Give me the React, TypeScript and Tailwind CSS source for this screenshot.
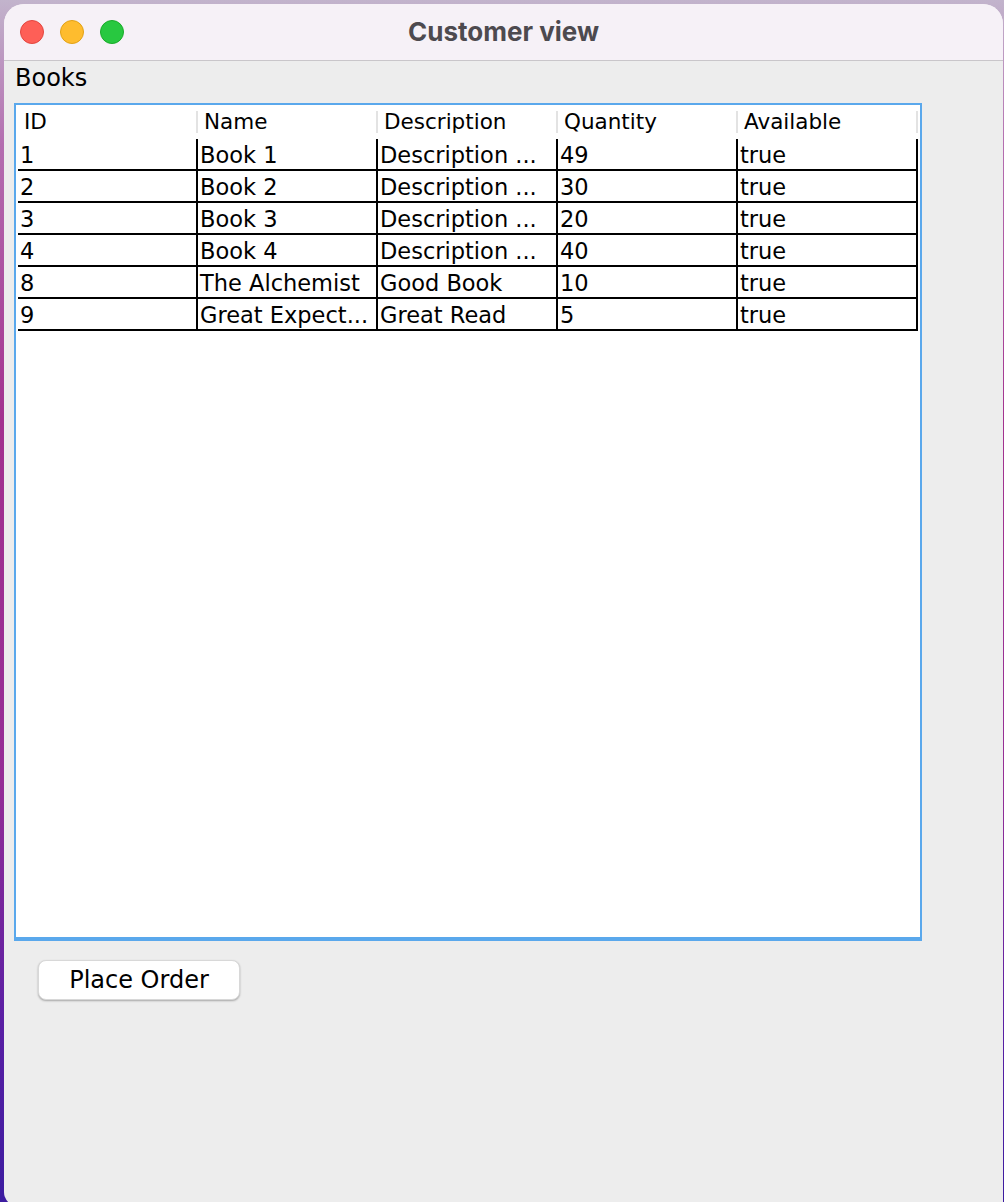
const columns = ['ID', 'Name', 'Description', 'Quantity', 'Available'];

const books = [
  ['1', 'Book 1', 'Description ...', '49', 'true'],
  ['2', 'Book 2', 'Description ...', '30', 'true'],
  ['3', 'Book 3', 'Description ...', '20', 'true'],
  ['4', 'Book 4', 'Description ...', '40', 'true'],
  ['8', 'The Alchemist', 'Good Book', '10', 'true'],
  ['9', 'Great Expect...', 'Great Read', '5', 'true'],
];

export default function App() {
  return (
    <div className="w-[1004px] h-[1202px] overflow-hidden bg-[linear-gradient(180deg,#c2b4cc_0%,#b46eb0_12%,#a3328f_35%,#952e96_65%,#5a1fa4_85%,#3c1ca0_100%)] pt-[4px] pl-[4px] pr-[1px]">
      <div className="h-[1202px] bg-[#ededed] rounded-t-[20px] rounded-bl-[14px] overflow-hidden flex flex-col font-['DejaVu_Sans',sans-serif]">
        {/* title bar */}
        <div className="h-[57px] shrink-0 bg-[#f6f1f7] border-b-[1.5px] border-[#c9c6ca] relative flex items-center justify-center">
          <div className="absolute left-[16px] top-[16px] flex gap-[16px]">
            <span className="w-[24px] h-[24px] rounded-full bg-[#fe5f57] border border-[#e2463f]" />
            <span className="w-[24px] h-[24px] rounded-full bg-[#febc2e] border border-[#e1a116]" />
            <span className="w-[24px] h-[24px] rounded-full bg-[#28c840] border border-[#1aab29]" />
          </div>
          <span className="font-['Inter',sans-serif] font-bold text-[26px] text-[#4d4a4f] -mt-[1px]">Customer view</span>
        </div>

        <div className="pl-[10px] flex flex-col">
          <div className="text-[24px] leading-[30px] text-black pl-[1px] mt-[2px] h-[40px]">Books</div>

          <div className="w-[908px] h-[838px] bg-white border-2 border-b-4 border-[#5aa8ec] pl-[2px] pr-[2px]">
            <div className="flex h-[34px] items-center">
              {columns.map((c) => (
                <div key={c} className="w-[180px] h-full flex items-center justify-between">
                  <span className="text-[21.5px] text-black pl-[6px] leading-none">{c}</span>
                  <span className="w-[2px] h-[22px] bg-[#e3e3e3]" />
                </div>
              ))}
            </div>
            {books.map((row) => (
              <div key={row[0]} className="flex h-[32px]">
                {row.map((cell, i) => (
                  <div
                    key={i}
                    className="w-[180px] h-full border-r-2 border-b-2 border-black pl-[2px] text-[22.5px] leading-[32px] text-black whitespace-nowrap overflow-hidden"
                  >
                    {cell}
                  </div>
                ))}
              </div>
            ))}
          </div>

          <button className="mt-[19px] ml-[24px] w-[202px] h-[40px] bg-white rounded-[8px] shadow-[0_1px_2px_rgba(0,0,0,0.3)] border border-[#d8d8d8] text-[24px] text-black flex items-center justify-center">
            Place Order
          </button>
        </div>
      </div>
    </div>
  );
}
